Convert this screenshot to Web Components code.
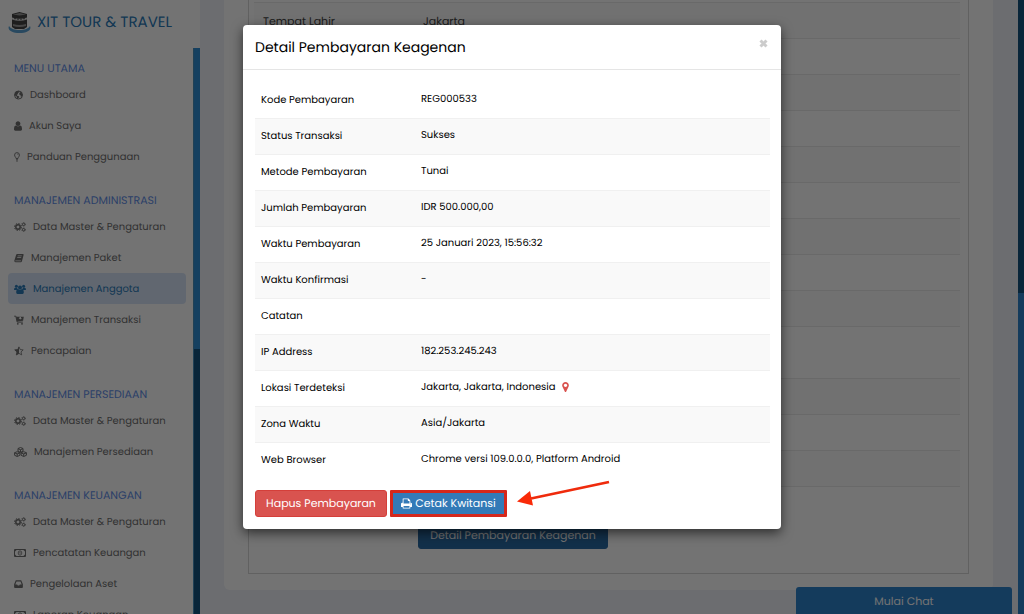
<!DOCTYPE html>
<html lang="id">
<head>
<meta charset="utf-8">
<meta name="viewport" content="width=device-width, initial-scale=1">
<title>XIT Tour &amp; Travel</title>
<style>
  body { margin: 0; font-family: Poppins, Inter, "Noto Sans", sans-serif; font-size: 11px; line-height: 16px; color: #000; text-rendering: geometricPrecision; }
</style>
</head>
<body>
<travel-app>
  <side-bar slot="sidebar" brand="XIT TOUR &amp; TRAVEL">
    <nav-group heading="MENU UTAMA">
      <nav-item icon="globe">Dashboard</nav-item>
      <nav-item icon="user">Akun Saya</nav-item>
      <nav-item icon="bulb">Panduan Penggunaan</nav-item>
    </nav-group>
    <nav-group heading="MANAJEMEN ADMINISTRASI">
      <nav-item icon="cogs">Data Master &amp; Pengaturan</nav-item>
      <nav-item icon="book">Manajemen Paket</nav-item>
      <nav-item icon="users" active>Manajemen Anggota</nav-item>
      <nav-item icon="cart">Manajemen Transaksi</nav-item>
      <nav-item icon="star">Pencapaian</nav-item>
    </nav-group>
    <nav-group heading="MANAJEMEN PERSEDIAAN">
      <nav-item icon="cogs">Data Master &amp; Pengaturan</nav-item>
      <nav-item icon="cubes">Manajemen Persediaan</nav-item>
    </nav-group>
    <nav-group heading="MANAJEMEN KEUANGAN">
      <nav-item icon="cogs">Data Master &amp; Pengaturan</nav-item>
      <nav-item icon="money">Pencatatan Keuangan</nav-item>
      <nav-item icon="inbox">Pengelolaan Aset</nav-item>
      <nav-item icon="money">Laporan Keuangan</nav-item>
    </nav-group>
  </side-bar>
  <member-card slot="content"></member-card>
  <chat-launcher slot="overlay"></chat-launcher>
  <payment-dialog slot="dialog" heading="Detail Pembayaran Keagenan"></payment-dialog>
</travel-app>

<script>
const ICONS = {
  globe: [9, 10, '<circle cx="4.5" cy="5" r="4" fill="none" stroke="currentColor"/><path fill="currentColor" d="M1 3l1.500-1.700 2.300-.3.500 1.200-1.300.900-.2 1.200-1 .5.300.9 1.400.2.9 1-1.200 1.300-.3 1.200-1-1.400-.2-1.500L1 5.500zM6.200 2l1.400.4.700 2-.3 1.600-1 .9-.6-1.800-1-.4-.2-1.200z"/>'],
  user: [8, 10, '<svg width="8" height="10" viewBox="256 128 1280 1536"><path fill="currentColor" d="M1536 1399q0 109-62.500 187t-150.500 78h-854q-88 0-150.500-78t-62.500-187q0-85 8.500-160.500t31.500-152 58.500-131 94-89 134.500-34.500q131 128 313 128t313-128q76 0 134.500 34.500t94 89 58.500 131 31.500 152 8.500 160.500zm-256-887q0 159-112.500 271.500t-271.500 112.500-271.500-112.500-112.500-271.500 112.500-271.500 271.500-112.500 271.500 112.500 112.500 271.500z"/></svg>'],
  bulb: [6, 10, '<path d="M2 6.500C2 5.300.6 4.700.6 3a2.400 2.400 0 014.800 0C5.400 4.700 4 5.300 4 6.500zM2 7.800h2M2.300 9.100h1.400" fill="none" stroke="currentColor" stroke-width=".9"/><path d="M3 1.900q1 0 1.200 1" fill="none" stroke="currentColor" stroke-width=".5"/>'],
  cogs: [12, 10, '<g fill="none" stroke="currentColor"><circle cx="4" cy="5" r="2.200" stroke-width="1.500"/><circle cx="4" cy="5" r="3.500" stroke-width="1" stroke-dasharray="1.400 1.350"/><circle cx="9.600" cy="2.400" r="1.200" stroke-width="1"/><circle cx="9.600" cy="2.400" r="1.900" stroke-width=".7" stroke-dasharray=".9 1.090"/><circle cx="9.600" cy="7.700" r="1.200" stroke-width="1"/><circle cx="9.600" cy="7.700" r="1.900" stroke-width=".7" stroke-dasharray=".9 1.090"/></g>'],
  book: [10, 10, '<path fill="currentColor" fill-rule="evenodd" d="M3.200 1h5.700q1 0 .7 1L8 8q-.3 1.200-1.300 1.200H1.500Q.2 9.200.3 7.800L2 2.200Q2.300 1 3.200 1zM1.300 7.400q-.2.900.6.900h4.900l.3-.9zM3.800 2.600l-.2.700h4l.2-.7zM3.300 4.200l-.2.700h4l.2-.7z"/>'],
  users: [12, 10, '<g fill="currentColor"><circle cx="2.400" cy="2.200" r="1.500"/><circle cx="9.600" cy="2.200" r="1.500"/><circle cx="6" cy="3.500" r="2"/><path d="M0 5.500Q0 3.800 1.200 3.800h1.900l.5 1.300-1.100 1H.9Q0 6.100 0 5.500zM12 5.500q0-1.700-1.200-1.700H8.900l-.5 1.300 1.100 1h1.600q.9 0 .9-.6zM2.200 8.600Q2.200 5.300 4 5.100q2 1.500 4 0 1.800.2 1.800 3.500Q9.800 10 8.600 10H3.400q-1.200 0-1.200-1.400z"/></g>'],
  cart: [10, 10, '<path d="M.2 1.200h1.600l1.400 5.900h5.600" fill="none" stroke="currentColor"/><path fill="currentColor" fill-rule="evenodd" d="M2 1.700h7.800l-.7 4-6.100.7zM5.500 2v1H4.600l1.700 1.600L8 3H7V2z"/><g fill="currentColor"><circle cx="3.800" cy="8.800" r=".9"/><circle cx="8" cy="8.800" r=".9"/></g>'],
  star: [10, 10, '<path fill="none" stroke="currentColor" stroke-width=".8" stroke-linejoin="round" d="M5 .9l1.200 2.700 3 .3-2.200 2 .7 3L5 7.400 2.300 8.900l.7-3-2.200-2 3-.3z"/><path fill="currentColor" d="M5 .5v6.900L2.200 9.200l.6-3.200L.4 3.800l3.300-.4z"/>'],
  cubes: [13, 10, '<g fill="none" stroke="currentColor" stroke-linejoin="round"><path d="M4 1.500L6.500.5 9 1.500v2.700L6.500 5.300 4 4.200zM4 1.700l2.500 1 2.500-1M6.500 2.700v2.500M.6 5.700l2.600-1 2.700 1v2.600L3.200 9.500.6 8.300zM.6 5.900l2.600 1 2.700-1M3.200 6.900v2.500M7.100 5.700l2.600-1 2.700 1v2.600L9.700 9.500 7.100 8.300zM7.100 5.900l2.600 1 2.700-1M9.700 6.900v2.500"/></g>'],
  money: [12, 10, '<path fill="none" stroke="currentColor" d="M.5 1.500h11v7H.5z"/><ellipse cx="6" cy="5" rx="1.800" ry="2.200" fill="none" stroke="currentColor" stroke-width=".8"/><path d="M5.500 4.300l.6-.4v2.200" fill="none" stroke="currentColor" stroke-width=".6"/><path fill="currentColor" d="M1 2h1.600L1 3.600zM11 2H9.400L11 3.600zM1 8h1.600L1 6.400zM11 8H9.400L11 6.400z"/>'],
  inbox: [9, 10, '<path fill="currentColor" fill-rule="evenodd" d="M1.800 1.300h5.400l1.700 4V8q0 .9-.9.900H1Q.1 8.900.1 8V5.300zM2.500 2.500L1.300 5.400h1.900l.6 1.200h1.400l.6-1.200h1.900L6.500 2.500z"/>'],
  print: [11, 11, '<svg width="11" height="11" viewBox="64 128 1664 1536"><path fill="currentColor" d="M448 1536h896v-256h-896v256zm0-640h896v-384h-160q-40 0-68-28t-28-68v-160h-640v640zm1152 64q0-26-19-45t-45-19-45 19-19 45 19 45 45 19 45-19 19-45zm128 0v416q0 13-9.500 22.500t-22.500 9.500h-224v160q0 40-28 68t-68 28h-960q-40 0-68-28t-28-68v-160h-224q-13 0-22.500-9.500t-9.500-22.500v-416q0-79 56.500-135.500t135.500-56.500h64v-544q0-40 28-68t68-28h672q40 0 88 20t76 48l152 152q28 28 48 76t20 88v256h64q79 0 135.500 56.500t56.500 135.500z"/></svg>'],
  pin: [7, 10, '<svg width="7" height="10" viewBox="384 128 1024 1536"><path fill="currentColor" d="M1152 640q0-106-75-181t-181-75-181 75-75 181 75 181 181 75 181-75 75-181zm256 0q0 109-33 179l-364 774q-16 33-47.500 52t-67.500 19-67.500-19-46.500-52l-365-774q-33-70-33-179 0-212 150-362t362-150 362 150 150 362z"/></svg>'],
  close: [9, 9, '<path d="M1.500 1.500l6 6m0-6l-6 6" stroke="currentColor" stroke-width="3" fill="none"/>']
};
const icon = name => {
  const [w, h, body] = ICONS[name];
  return `<svg width="${w}" height="${h}" viewBox="0 0 ${w} ${h}" aria-hidden="true">${body}</svg>`;
};

class BaseElement extends HTMLElement {
  connectedCallback() {
    if (this.shadowRoot) return;
    this.attachShadow({ mode: 'open' }).innerHTML =
      `<style>:host,*{box-sizing:border-box}button{font:inherit;text-rendering:inherit;cursor:pointer}svg{display:block;flex:none}${this.styles()}</style>${this.render()}`;
  }
}

customElements.define('travel-app', class extends BaseElement {
  styles() { return `
    :host { display: grid; grid-template-columns: 200px 1fr 6px; height: 100vh; overflow: hidden; background: #eff2f9; position: relative; }
    main { padding: 0 25px 0 24px; min-width: 0; overflow: hidden; }
    .track { background: #12537f; display: grid; grid-template-rows: 293px 1fr; }
    .track::after { content: ""; grid-row: 2; background: #2d83cc; }
    .backdrop { position: absolute; inset: 0; background: rgba(0,0,0,.55); display: flex; justify-content: center; align-items: flex-start; padding: 25px 20px; }
  `; }
  render() { return `
    <slot name="sidebar"></slot>
    <main><slot name="content"></slot></main>
    <div class="track"></div>
    <slot name="overlay"></slot>
    <div class="backdrop"><slot name="dialog"></slot></div>`; }
});

customElements.define('side-bar', class extends BaseElement {
  styles() { return `
    :host { display: flex; flex-direction: column; height: 100vh; background: #fff; overflow: hidden; }
    header { display: flex; align-items: center; gap: 6px; height: 48px; padding: 0 8px 3px; flex: none; background: #fff; }
    h1 { margin: 0; font-size: 15px; line-height: 20px; font-weight: 400; color: #2b7bb9; white-space: nowrap; }
    .scroll { flex: 1; min-height: 0; display: grid; grid-template-columns: 1fr 7px; overflow: hidden; }
    nav { padding: 9px 7px 0 8px; display: flex; flex-direction: column; gap: 17px; min-height: 0; }
    .track { background: #12537f; display: grid; grid-template-rows: 301px 1fr; border-left: 1px solid #4a90bd; }
    .track::before { content: ""; background: #2f8fd6; }
  `; }
  render() { return `
    <header>
      <svg width="23" height="23" viewBox="0 0 23 23" aria-hidden="true">
        <path d="M1 15c-2 4 3 7 10.500 7S24 19 22 15c-2 3-6 4-10.500 4S3 18 1 15z" fill="#5ba3d6"/>
        <path d="M4 3l7.500-2L19 3v13l-3 2H7l-3-2z" fill="#444"/>
        <path d="M5 3.500l6.500-1.500L18 3.500l-6.500 1z" fill="#999"/>
        <path d="M4 6.500q7.500 2.500 15 0v2q-7.500 2.500-15 0z" fill="#ddd"/>
        <path d="M6 7.700h2m1 .4h2m1 0h2m1-.4h2" stroke="#555"/>
        <path d="M5 13q6.500 2 13 0v2q-6.500 2-13 0z" fill="#999"/>
      </svg>
      <h1>${this.getAttribute('brand').replace('&', '&amp;')}</h1>
    </header>
    <div class="scroll"><nav><slot></slot></nav><div class="track"></div></div>`; }
});

customElements.define('nav-group', class extends BaseElement {
  styles() { return `
    :host { display: block; flex: none; }
    h2 { margin: 0; padding-left: 6px; font-size: 11px; line-height: 22px; font-weight: 400; color: #5f8ee8; white-space: nowrap; }
  `; }
  render() { return `<h2>${this.getAttribute('heading')}</h2><slot></slot>`; }
});

customElements.define('nav-item', class extends BaseElement {
  styles() { return `
    :host { display: block; }
    a { display: flex; align-items: center; gap: 7px; height: 31px; padding-left: 6px; border-radius: 4px; color: #707070; text-decoration: none; white-space: nowrap; font-size: 10px; }
    :host([active]) a { background: #d7e5f8; color: #2b7bb9; }
  `; }
  render() { return `<a href="#">${icon(this.getAttribute('icon'))}<span><slot></slot></span></a>`; }
});

customElements.define('member-card', class extends BaseElement {
  styles() { return `
    :host { display: block; height: 590px; padding: 0 24px 16px; background: #fff; border-radius: 0 0 6px 6px; }
    .panel { height: 574px; border: 1px solid #d8d8d8; border-top: 0; padding: 2px 8px 0 5px; }
    table { width: 100%; border-collapse: collapse; table-layout: fixed; }
    th, td { height: 36px; padding: 0 9px; text-align: left; font-weight: 400; border-top: 1px solid #e8e8e8; color: #444; }
    th { width: 160px; }
    tr:nth-child(odd) > * { background: #fafafa; }
    tr.tall > * { height: 52px; }
    tr.action > * { height: 72px; padding: 0 0 10px 4px; background: none; vertical-align: bottom; }
    button { display: block; height: 27px; width: 190px; padding: 0; border: 1px solid #2a6aa4; border-radius: 3px; background: #286ba4; color: #fff; font-size: 11px; white-space: nowrap; }
  `; }
  render() {
    const rows = Array.from({ length: 12 }, (_, i) => `<tr${i === 8 ? ' class="tall"' : ''}><td></td><td></td></tr>`).join('');
    return `<div class="panel"><table><tbody>
      <tr><th scope="row">Tempat Lahir</th><td>Jakarta</td></tr>
      ${rows}
      <tr class="action"><td></td><td><button type="button">Detail Pembayaran Keagenan</button></td></tr>
    </tbody></table></div>`;
  }
});

customElements.define('chat-launcher', class extends BaseElement {
  styles() { return `
    :host { display: block; position: absolute; right: 12px; bottom: 0; width: 216px; }
    button { display: block; width: 100%; height: 27px; padding: 0; border: 0; border-radius: 3px 3px 0 0; background: #2d83cc; color: #fff; font-size: 11px; }
  `; }
  render() { return `<button type="button">Mulai Chat</button>`; }
});

customElements.define('payment-dialog', class extends BaseElement {
  styles() { return `
    :host { display: block; width: 100%; max-width: 538px; background: #fff; border-radius: 4px; box-shadow: 0 4px 12px rgba(0,0,0,.6); }
    header { display: flex; justify-content: space-between; align-items: flex-start; padding: 12px; border-bottom: 1px solid #e5e5e5; }
    h2 { margin: 0; font-size: 14px; line-height: 20px; font-weight: 400; }
    .close { border: 0; background: none; color: #ccc; padding: 2px 1px; }
    .body { padding: 12px 11px 12px 12px; }
    table { width: 100%; border-collapse: collapse; table-layout: fixed; }
    th, td { height: 36px; padding: 0 6px 2px; text-align: left; font-weight: 400; border-top: 1px solid #f0f0f0; white-space: nowrap; font-size: 10px; }
    th { width: 160px; }
    td { padding-bottom: 4px; }
    tr:first-child > * { border-top-color: transparent; }
    tr:nth-child(even) > * { background: #f9f9f9; }
    .loc { display: flex; align-items: center; gap: 6px; }
    .loc svg { color: #d9534f; }
    footer { display: flex; gap: 3px; margin-top: 11px; }
    button.act { display: flex; align-items: center; justify-content: center; gap: 3px; width: 132px; height: 27px; padding: 0; border: 1px solid #d43f3a; border-radius: 3px; background: #d9534f; color: #fff; font-size: 11px; white-space: nowrap; }
    button.print { width: 117px; background: #337ab7; border: 3px solid #d5281c; border-radius: 1px; }
    .callout { position: relative; }
    .callout > svg { position: absolute; left: 127px; top: -11px; }
  `; }
  render() {
    const rows = [
      ['Kode Pembayaran', 'REG000533'],
      ['Status Transaksi', 'Sukses'],
      ['Metode Pembayaran', 'Tunai'],
      ['Jumlah Pembayaran', 'IDR 500.000,00'],
      ['Waktu Pembayaran', '25 Januari 2023, 15:56:32'],
      ['Waktu Konfirmasi', '-'],
      ['Catatan', ''],
      ['IP Address', '182.253.245.243'],
      ['Lokasi Terdeteksi', `<div class="loc"><span>Jakarta, Jakarta, Indonesia</span>${icon('pin')}</div>`],
      ['Zona Waktu', 'Asia/Jakarta'],
      ['Web Browser', 'Chrome versi 109.0.0.0, Platform Android']
    ];
    return `
    <header><h2>${this.getAttribute('heading')}</h2><button class="close" type="button" aria-label="Tutup">${icon('close')}</button></header>
    <div class="body">
      <table><tbody>${rows.map(([k, v]) => `<tr><th scope="row">${k}</th><td>${v}</td></tr>`).join('')}</tbody></table>
      <footer>
        <button class="act" type="button">Hapus Pembayaran</button>
        <div class="callout">
          <button class="act print" type="button">${icon('print')}<span>Cetak Kwitansi</span></button>
          <svg width="94" height="28" viewBox="0 0 94 28" aria-hidden="true"><path d="M92 3L14 19.500" stroke="#ef2b0c" stroke-width="2.800"/><path d="M0 22.500L13 12l3 14.500z" fill="#f92a08"/></svg>
        </div>
      </footer>
    </div>`;
  }
});
</script>
</body>
</html>
